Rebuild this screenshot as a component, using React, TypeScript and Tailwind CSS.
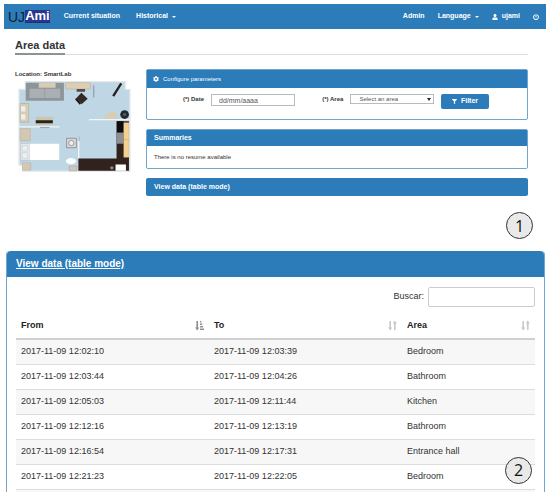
import React, { useState } from 'react';
import { FaUser, FaPowerOff, FaFilter, FaCog } from 'react-icons/fa';

interface Reading {
  from: string;
  to: string;
  area: string;
}

const readings: Reading[] = [
  { from: '2017-11-09 12:02:10', to: '2017-11-09 12:03:39', area: 'Bedroom' },
  { from: '2017-11-09 12:03:44', to: '2017-11-09 12:04:26', area: 'Bathroom' },
  { from: '2017-11-09 12:05:03', to: '2017-11-09 12:11:44', area: 'Kitchen' },
  { from: '2017-11-09 12:12:16', to: '2017-11-09 12:13:19', area: 'Bathroom' },
  { from: '2017-11-09 12:16:54', to: '2017-11-09 12:17:31', area: 'Entrance hall' },
  { from: '2017-11-09 12:21:23', to: '2017-11-09 12:22:05', area: 'Bedroom' },
];

const Caret = () => (
  <svg viewBox="0 0 6 3" className="ml-1 inline-block h-[2px] w-1" fill="currentColor">
    <path d="M0 0h6L3 3z" />
  </svg>
);

const SortIcon = () => (
  <svg viewBox="0 0 9 11" className="h-[11px] w-[9px] text-[#c8c8c8]" fill="currentColor">
    <path d="M1.4 1h1.600v6.500h1.300L2.200 10.500.1 7.500h1.300z" />
    <path d="M6 10h1.600V3.500h1.300L6.800.5 4.700 3.500H6z" />
  </svg>
);

const SortedIcon = () => (
  <svg viewBox="0 0 9 11" className="h-[11px] w-[9px] text-[#8f8f8f]" fill="currentColor">
    <path d="M1.400 1H3v6.500h1.300L2.200 10.500.1 7.500h1.300z" />
    <path d="M5 1h1.300v1.600H5zM5 3.500h2.200v1.600H5zM5 6h3.100v1.600H5zM5 8.500h4v1.600H5z" />
  </svg>
);

const StepBadge = ({ value }: { value: number }) => (
  <div className="flex size-[27px] items-center justify-center rounded-full border border-[#333] bg-[#e9e9ea] font-['Open_Sans',sans-serif] text-base leading-none text-[#111]">
    {value}
  </div>
);

const FloorPlan = () => (
  <svg viewBox="54 54 340 276" className="ml-[3px] mt-px w-[87%]" role="img" aria-label="SmartLab floor plan">
    <path d="M76 59H374V82H388V326H68V308H57V82H76z" fill="#bfd6e4" stroke="#e4e8ea" strokeWidth="4" />
    {/* sofa */}
    <path d="M77 62H191V116H77z" fill="#8e959a" />
    <path d="M88 80H133V108H88zM135 80H180V108H135z" fill="#a9afb3" />
    <path d="M116 63H166V77H116z" fill="#d8ccb5" />
    {/* desk and chair */}
    <path d="M196 62H270V81H196z" fill="#dccdb3" stroke="#a99b83" />
    <path d="M229 81H254V89H229z" fill="#4e4a45" />
    <path d="M243 92L262 110 244 126 227 109z" fill="#332925" />
    <path d="M226 110L240 126" stroke="#19120f" strokeWidth="5" />
    {/* entrance */}
    <path d="M280 70V106" stroke="#8695a0" strokeWidth="3" />
    <path d="M362 64L338 102" stroke="#222" strokeWidth="7" />
    <path d="M311 169Q316 150 338 149Q350 151 352 169z" fill="#d8ccb5" />
    <circle cx="372" cy="157" r="13" fill="#22282f" />
    <circle cx="372" cy="157" r="5" fill="#4b5763" />
    {/* shelves */}
    <path d="M60 124H86V180H60z" fill="#d8ccb5" stroke="#968b7a" />
    <path d="M63 132H76V148H63zM63 156H76V172H63z" fill="#eee" />
    <path d="M107 164H158V188H107z" fill="#ccc3b0" />
    <path d="M107 174H158V183H107z" fill="#252618" />
    {/* walls */}
    <path d="M58 194H178M266 172H388M235 222V328" stroke="#f3f4f4" strokeWidth="4" />
    <path d="M120 196H148M236 222V236" stroke="#718087" strokeWidth="2" />
    {/* bed */}
    <path d="M60 199H91V235H60zM67 301H92V323H67z" fill="#d4c8b2" stroke="#ad9e87" />
    <path d="M62 244H177V293H62z" fill="#fff" />
    <path d="M62 244H88V293H62zM66 250H83V266H66zM66 271H83V288H66z" fill="#edf0f2" stroke="#9aa3a8" />
    {/* bathroom */}
    <path d="M199 228H228V256H199z" fill="#dadada" stroke="#777" strokeWidth="2" />
    <circle cx="213" cy="242" r="8" fill="#eee" stroke="#777" strokeWidth="2" />
    <ellipse cx="212" cy="296" rx="15" ry="9" fill="#fff" />
    <path d="M207 311H230V325H207z" fill="#d0c7b5" stroke="#888" />
    {/* kitchen */}
    <path d="M348 177H385V325H234V288H348z" fill="#32221e" />
    <path d="M349 177H369V211H349z" fill="#0e0c0c" />
    <path d="M349 211H369V244H349z" fill="#8d9092" />
    <path d="M369 181H385V285H369z" fill="#f3d08f" />
    <path d="M369 232H385" stroke="#a98b53" />
    <path d="M345 306H376V325H345z" fill="#fff" />
    <circle cx="334" cy="316" r="5" fill="#8b8b88" />
  </svg>
);

export default function App() {
  const [date, setDate] = useState('');
  const [area, setArea] = useState('');
  const [search, setSearch] = useState('');

  const rows = readings.filter((r) =>
    `${r.from} ${r.to} ${r.area}`.toLowerCase().includes(search.toLowerCase())
  );

  return (
    <div className="bg-white px-1 pt-1 font-['Liberation_Sans',Arial,sans-serif] text-[#333]">
      {/* Navbar */}
      <nav className="flex h-[25px] items-center bg-[#2b7cb9] pl-1 pr-[7px] text-[7px] font-bold text-white">
        <a href="#" aria-label="UJAmi" className="flex items-center text-sm leading-none">
          <span className="font-normal text-[#10202e]">UJ</span>
          <span className="border-b border-dotted border-[#1c2a4a] bg-[#2a3590] text-[13px] leading-3">Ami</span>
        </a>
        <a href="#" className="ml-3.5">Current situation</a>
        <button className="ml-4 flex items-center">Historical<Caret /></button>
        <div className="ml-auto flex items-center gap-[13px]">
          <a href="#">Admin</a>
          <button className="flex items-center">Language<Caret /></button>
          <a href="#" className="flex items-center gap-1"><FaUser size={6} />ujami</a>
          <button aria-label="Log out"><FaPowerOff size={6} /></button>
        </div>
      </nav>

      <main className="pl-[11px] pr-[18px]">
        <div className="mt-2 flex border-b border-[#ddd]">
          <h1 className="-mb-px border-b-2 border-[#8a9496] text-[11px] font-bold leading-4">Area data</h1>
        </div>

        <div className="mt-3.5 flex items-start">
          <div className="w-[131px] shrink-0">
            <p className="text-[6px] font-bold leading-[10px]">Location: SmartLab</p>
            <FloorPlan />
          </div>

          <div className="flex flex-1 flex-col gap-[9px]">
            <section className="rounded-xs border border-[#6ea6d0]">
              <h2 className="flex h-[18px] items-center gap-1 bg-[#2b7cb9] px-1.5 text-[6px] text-white">
                <FaCog size={6} />Configure parameters
              </h2>
              <form
                className="grid grid-cols-[15%_22%_11%_22%_1fr] items-start gap-[7px] pb-2.5 pt-1.5 text-[6px]"
                onSubmit={(e) => e.preventDefault()}
              >
                <label htmlFor="date" className="text-right font-bold leading-[10px]">(*) Date</label>
                <input
                  id="date"
                  type="text"
                  value={date}
                  onChange={(e) => setDate(e.target.value)}
                  placeholder="dd/mm/aaaa"
                  className="h-3 w-full border border-[#b5bcc2] px-[7px] text-[7px] placeholder:text-[#555]"
                />
                <label htmlFor="area" className="text-right font-bold leading-[10px]">(*) Area</label>
                <div className="relative">
                  <select
                    id="area"
                    value={area}
                    onChange={(e) => setArea(e.target.value)}
                    className="block h-2.5 w-full appearance-none border border-[#b5bcc2] px-2 leading-2 text-[#555]"
                  >
                    <option value="">Select an area</option>
                    <option>Bedroom</option>
                    <option>Bathroom</option>
                    <option>Kitchen</option>
                  </select>
                  <svg viewBox="0 0 4 3" className="pointer-events-none absolute right-[3px] top-1 h-[3px] w-1">
                    <path d="M0 0h4L2 3z" fill="#222" />
                  </svg>
                </div>
                <button className="flex h-[15px] w-12 items-center justify-center gap-1 rounded-xs bg-[#2b7cb9] text-[7px] font-bold text-white">
                  <FaFilter size={5} />Filter
                </button>
              </form>
            </section>

            <section className="rounded-xs border border-[#6ea6d0]">
              <h2 className="bg-[#2b7cb9] px-[7px] text-[7px] font-bold leading-4 text-white">Summaries</h2>
              <p className="px-[7px] py-1.5 text-[6px] leading-[10px]">There is no resume available</p>
            </section>

            <h2 className="rounded-xs bg-[#2b7cb9] px-2 text-[7px] font-bold leading-[18px] text-white">
              View data (table mode)
            </h2>
          </div>
        </div>
      </main>

      <div className="mt-4 flex justify-end pr-[13px]">
        <StepBadge value={1} />
      </div>

      {/* Table view */}
      <section className="relative ml-0.5 mr-px mt-3 rounded-t-sm border-x border-[#6ea6d0]">
        <h2 className="rounded-t-sm bg-[#2b7cb9] px-[9px] text-[10px] font-bold leading-[26px] text-white">
          <a href="#" className="underline">View data (table mode)</a>
        </h2>
        <div className="px-[9px] pt-2.5 text-[9px]">
          <div className="flex items-center justify-end gap-1">
            <label htmlFor="search">Buscar:</label>
            <input
              id="search"
              value={search}
              onChange={(e) => setSearch(e.target.value)}
              className="h-5 w-[107px] rounded-xs border border-[#ccc] px-1"
            />
          </div>
          <table className="mt-1.5 w-full table-fixed border-collapse text-left">
            <thead>
              <tr className="h-[26px] border-b-2 border-[#d0d0d0] text-[#222]">
                <th className="px-[5px]">
                  <div className="flex items-center justify-between">From <SortedIcon /></div>
                </th>
                <th className="px-[5px]">
                  <div className="flex items-center justify-between">To <SortIcon /></div>
                </th>
                <th className="w-[133px] px-[5px]">
                  <div className="flex items-center justify-between">Area <SortIcon /></div>
                </th>
              </tr>
            </thead>
            <tbody>
              {rows.map((row) => (
                <tr key={row.from} className="h-[25px] border-b border-[#ddd] odd:bg-[#f7f7f7]">
                  <td className="px-[5px]">{row.from}</td>
                  <td className="px-[5px]">{row.to}</td>
                  <td className="px-[5px]">{row.area}</td>
                </tr>
              ))}
            </tbody>
          </table>
          <div className="h-[2px] bg-[#f7f7f7]" />
        </div>
        <div className="absolute bottom-2 right-3">
          <StepBadge value={2} />
        </div>
      </section>
    </div>
  );
}
